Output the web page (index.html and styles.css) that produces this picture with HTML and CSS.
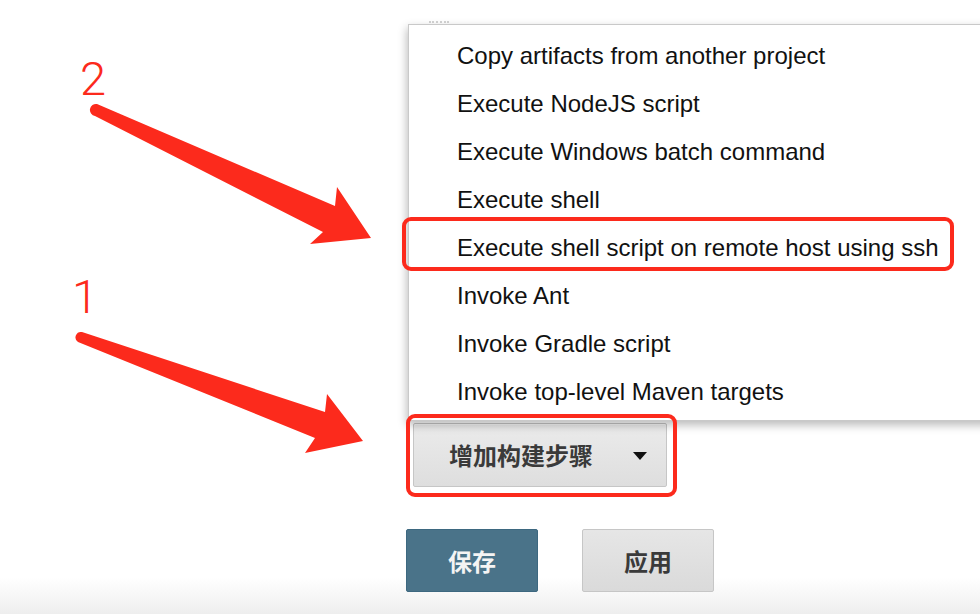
FILE: index.html
```html
<!DOCTYPE html>
<html lang="zh-CN">
<head>
<meta charset="utf-8">
<title>Build steps</title>
<link rel="stylesheet" href="styles.css">
</head>
<body>
<div class="stage">
  <span class="grip"></span>
  <div class="column">
    <ul class="menu">
      <li class="menu-item">Copy artifacts from another project</li>
      <li class="menu-item">Execute NodeJS script</li>
      <li class="menu-item">Execute Windows batch command</li>
      <li class="menu-item">Execute shell</li>
      <li class="menu-item">Execute shell script on remote host using ssh</li>
      <li class="menu-item">Invoke Ant</li>
      <li class="menu-item">Invoke Gradle script</li>
      <li class="menu-item">Invoke top-level Maven targets</li>
    </ul>
    <button class="add-step" type="button">
      <span class="add-step-label">增加构建步骤</span>
      <span class="caret"></span>
    </button>
    <div class="actions">
      <button class="btn btn-primary" type="button">保存</button>
      <button class="btn btn-secondary" type="button">应用</button>
    </div>
  </div>

  <div class="mark mark-menu"></div>
  <div class="mark mark-button"></div>

  <svg class="annotations" width="980" height="614" viewBox="0 0 980 614" aria-hidden="false">
    <text class="num" x="80" y="95">2</text>
    <text class="num" x="72" y="313">1</text>
    <path class="arrow" d="M97 104 L335 206 L337 187 L371 238 L310 244 L323 232 L95 116 A6 6 0 0 1 97 104 Z"/>
    <path class="arrow" d="M82 332 L325 412 L327 394 L363 441 L305 453 L315 438 L78 342 A5.5 5.5 0 0 1 82 332 Z"/>
  </svg>
</div>
</body>
</html>
```

FILE: styles.css
```css
html, body {
  margin: 0;
  padding: 0;
}

body {
  width: 980px;
  height: 614px;
  overflow: hidden;
  background: linear-gradient(to bottom, #ffffff 0, #ffffff 578px, #eeeeee 614px);
  font-family: "Liberation Sans", Arial, sans-serif;
}

.stage {
  position: relative;
  width: 980px;
  height: 614px;
  overflow: hidden;
}

.grip {
  position: absolute;
  left: 429px;
  top: 21px;
  width: 20px;
  height: 0;
  border-top: 2px dotted #d4d4d4;
}

.column {
  display: flex;
  flex-direction: column;
  align-items: flex-start;
  margin-left: 406px;
  padding-top: 24px;
}

.menu {
  list-style: none;
  margin: 0 0 0 2px;
  padding: 7px 0 4px;
  width: 640px;
  background: #ffffff;
  border: 1px solid #c9c9c9;
  border-right: none;
  box-shadow: -1px 4px 9px rgba(0, 0, 0, 0.28);
  position: relative;
  z-index: 1;
}

.menu-item {
  height: 48px;
  line-height: 48px;
  padding-left: 48px;
  font-size: 24px;
  color: #111111;
  white-space: nowrap;
}

.add-step {
  display: flex;
  align-items: center;
  justify-content: space-between;
  box-sizing: border-box;
  width: 254px;
  height: 64px;
  margin: 2px 0 0 7px;
  padding: 0 19px 0 35px;
  border: 1px solid #c6c6c6;
  border-radius: 2px;
  background: linear-gradient(to bottom, #ebebeb 0, #dedede 100%);
  box-shadow: inset 0 1px 0 rgba(255, 255, 255, 0.6);
  font-family: "Noto Sans CJK SC", "Liberation Sans", sans-serif;
  font-size: 24px;
  font-weight: 700;
  color: #3a3a3a;
  cursor: pointer;
}

.add-step-label {
  line-height: 1;
}

.caret {
  width: 0;
  height: 0;
  border-left: 7px solid transparent;
  border-right: 7px solid transparent;
  border-top: 8px solid #111111;
  margin-top: 2px;
}

.actions {
  display: flex;
  gap: 44px;
  margin-top: 42px;
}

.btn {
  box-sizing: border-box;
  width: 132px;
  height: 63px;
  border-radius: 2px;
  font-family: "Noto Sans CJK SC", "Liberation Sans", sans-serif;
  font-size: 24px;
  font-weight: 700;
  cursor: pointer;
  padding: 0;
}

.btn-primary {
  background: #4a7389;
  border: 1px solid #3d6880;
  color: #f4f4f4;
}

.btn-secondary {
  background: linear-gradient(to bottom, #e6e6e6 0, #dadada 100%);
  border: 1px solid #c6c6c6;
  color: #3a3a3a;
}

.mark {
  position: absolute;
  box-sizing: border-box;
  border: 4px solid #fc2a1c;
  border-radius: 9px;
  z-index: 2;
}

.mark-menu {
  left: 402px;
  top: 217px;
  width: 552px;
  height: 54px;
}

.mark-button {
  left: 406px;
  top: 414px;
  width: 271px;
  height: 83px;
}

.annotations {
  position: absolute;
  left: 0;
  top: 0;
  z-index: 3;
  pointer-events: none;
}

.num {
  font-family: Roboto, "Liberation Sans", sans-serif;
  font-weight: 300;
  font-size: 47px;
  fill: #fc2a1c;
}

.arrow {
  fill: #fc2a1c;
}
```
